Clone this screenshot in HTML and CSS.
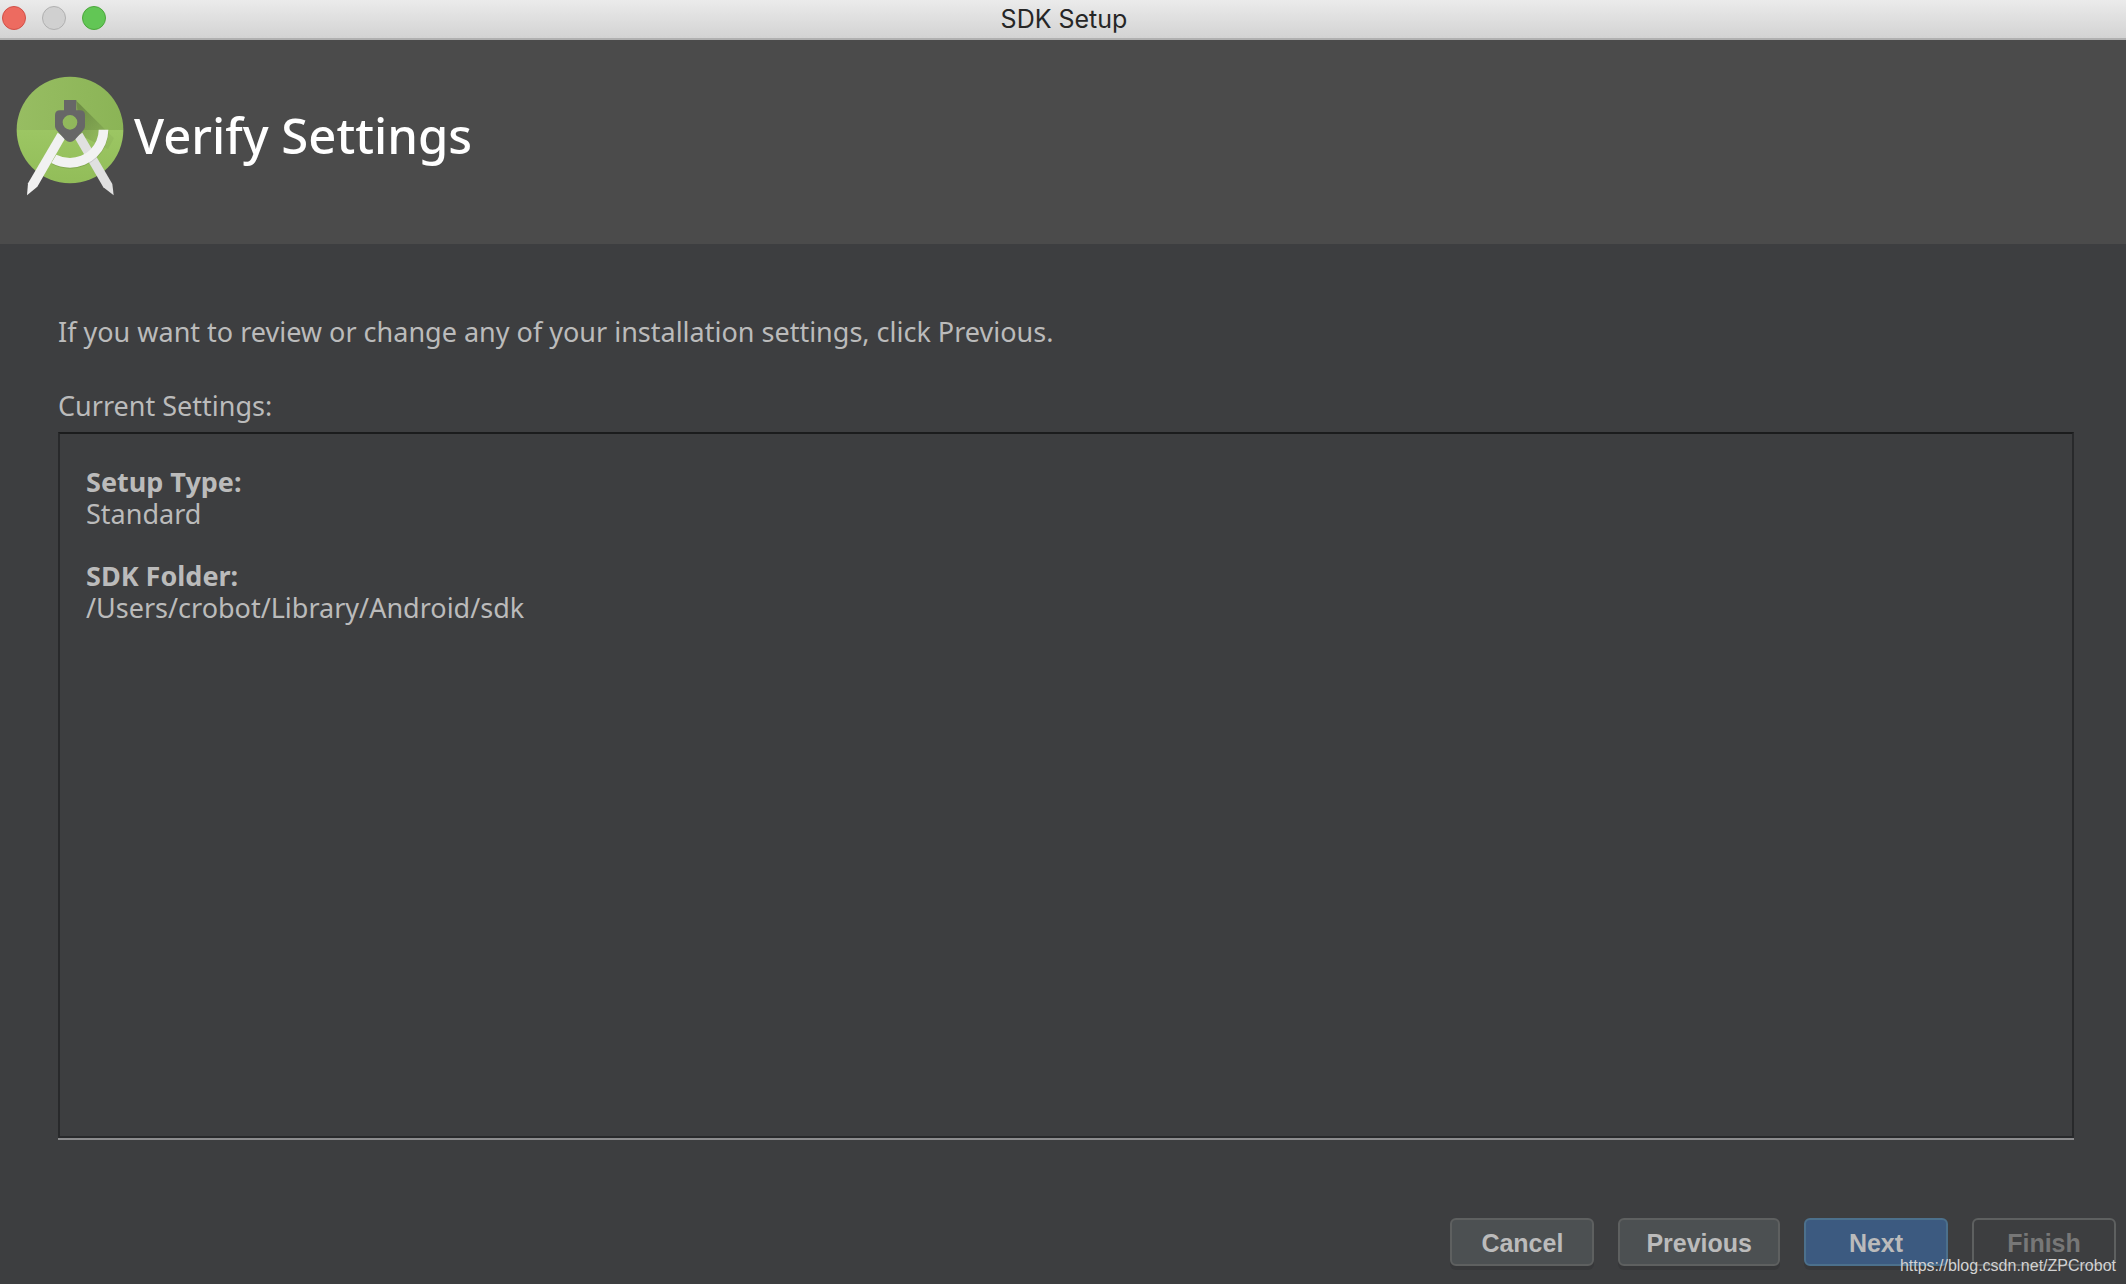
FILE: index.html
```
<!DOCTYPE html>
<html lang="en">
<head>
    <meta charset="UTF-8">
    <meta name="viewport" content="width=device-width, initial-scale=1.0">
    <title>SDK Setup</title>
    <link rel="stylesheet" href="styles.css">
</head>
<body>
    <div class="titlebar">
        <div class="window-controls">
            <button class="dot close" type="button" aria-label="Close"></button>
            <button class="dot minimize" type="button" aria-label="Minimize" disabled></button>
            <button class="dot zoom" type="button" aria-label="Zoom"></button>
        </div>
        <div class="window-title">SDK Setup</div>
    </div>

    <header class="banner">
        <svg class="logo" viewBox="48 48 324 360" aria-hidden="true">
            <defs>
                <linearGradient id="shade" gradientUnits="userSpaceOnUse" x1="235" y1="150" x2="325" y2="225">
                    <stop offset="0" stop-color="#000" stop-opacity="0.22"/>
                    <stop offset="1" stop-color="#000" stop-opacity="0.04"/>
                </linearGradient>
                <linearGradient id="upper" x1="0" y1="0" x2="1" y2="0">
                    <stop offset="0" stop-color="#97bd62"/>
                    <stop offset="1" stop-color="#8bb456"/>
                </linearGradient>
                <linearGradient id="lower" x1="0" y1="0" x2="0" y2="1">
                    <stop offset="0" stop-color="#9cc663"/>
                    <stop offset="1" stop-color="#92bd59"/>
                </linearGradient>
            </defs>
            <path d="M50 210a160 160 0 0 1 320 0z" fill="url(#upper)"/>
            <path d="M50 210a160 160 0 0 0 320 0z" fill="url(#lower)"/>
            <path d="M229 122L342 235L324 268L240 225z" fill="url(#shade)"/>
            <!-- legs -->
            <path d="M224 234L247 218L337 372L341 406L310 382z" fill="#e0e0e0"/>
            <path d="M173 218L196 234L112 380L81 406L84 370z" fill="#f1f1f1"/>
            <!-- arc -->
            <path d="M155 312Q182 326 210 326A116 116 0 0 0 326 212H296A86 86 0 0 1 210 297Q189 297 169 286z" fill="#000" opacity="0.12"/>
            <path d="M154 309Q180 323 210 323A115 114 0 0 0 325 209H296A86 85 0 0 1 210 294Q189 294 169 284z" fill="#f2f2f2"/>
            <!-- head -->
            <path fill-rule="evenodd" d="M192 120H229V151H240Q255 151 255 166V199Q255 206 250 211L224 240Q210 252 196 240L170 211Q165 206 165 199V166Q165 151 180 151H192zM210 165a22 22 0 1 0 0 44a22 22 0 1 0 0-44z" fill="#676767"/>
        </svg>
        <h1>Verify Settings</h1>
    </header>

    <main class="content">
        <p class="intro">If you want to review or change any of your installation settings, click Previous.</p>
        <h2 class="caption" id="caption">Current Settings:</h2>
        <dl class="settings" aria-labelledby="caption">
            <div class="setting">
                <dt>Setup Type:</dt>
                <dd>Standard</dd>
            </div>
            <div class="setting">
                <dt>SDK Folder:</dt>
                <dd>/Users/crobot/Library/Android/sdk</dd>
            </div>
        </dl>
    </main>

    <footer class="actions">
        <button class="btn" type="button">Cancel</button>
        <button class="btn" type="button">Previous</button>
        <button class="btn primary" type="button">Next</button>
        <button class="btn" type="button" disabled>Finish</button>
        <span class="watermark">https://blog.csdn.net/ZPCrobot</span>
    </footer>
</body>
</html>
```
FILE: styles.css
```
* {
    margin: 0;
    padding: 0;
    box-sizing: border-box;
}

body {
    display: flex;
    flex-direction: column;
    min-height: 100vh;
    background: #3d3e40;
    color: #bbbbbb;
    font-family: "Noto Sans", "Open Sans", sans-serif;
    font-size: 27px;
    line-height: 32px;
}

.titlebar {
    display: grid;
    grid-template-columns: 1fr auto 1fr;
    align-items: center;
    height: 40px;
    padding: 0 0 2px 2px;
    background: linear-gradient(#ebebeb, #d3d3d3);
    border-bottom: 2px solid #b0b0b0;
}

.window-controls {
    display: flex;
    gap: 16px;
}

.dot {
    width: 24px;
    height: 24px;
    border: 1px solid;
    border-radius: 50%;
}

.dot.close {
    background: #ed6b60;
    border-color: #d15048;
}

.dot.minimize {
    background: #d0d0d0;
    border-color: #b0b0b0;
}

.dot.zoom {
    background: #62c655;
    border-color: #4ca73c;
}

.window-title {
    padding-top: 2px;
    color: #262626;
    font-family: Inter, sans-serif;
    font-size: 25px;
}

.banner {
    display: flex;
    align-items: flex-start;
    gap: 10px;
    height: 204px;
    padding: 36px 16px;
    background: #4b4b4b;
}

.logo {
    width: 108px;
    height: 120px;
}

h1 {
    padding-top: 24px;
    color: #ffffff;
    font-size: 49px;
    font-weight: 500;
    line-height: 70px;
}

.content {
    flex: 1;
    display: flex;
    flex-direction: column;
    padding: 72px 52px 0 58px;
}

.caption {
    margin: 42px 0 10px;
    font-size: 27px;
    font-weight: 400;
}

.settings {
    flex: 1;
    display: flex;
    flex-direction: column;
    gap: 30px;
    padding: 32px 26px;
    border: 2px solid #28292b;
    border-top-color: #1b1c1d;
    box-shadow: 0 2px #8c8c8e;
}

dt {
    font-weight: 700;
}

.actions {
    position: relative;
    display: flex;
    justify-content: flex-end;
    gap: 24px;
    padding: 80px 10px 18px;
}

.btn {
    min-width: 144px;
    height: 48px;
    padding: 2px 26px 0;
    background: #4c5052;
    border: 2px solid #5e6060;
    border-radius: 6px;
    box-shadow: 0 4px #37383a;
    color: #bbbbbb;
    font-family: "Liberation Sans", Arial, sans-serif;
    font-size: 25px;
    font-weight: 700;
}

.btn.primary {
    background: #3c5a80;
    border-color: #4c708c;
}

.btn:disabled {
    background: transparent;
    box-shadow: none;
    color: #777777;
}

/* sits over the bottom edge of the buttons */
.watermark {
    position: absolute;
    right: 10px;
    bottom: 2px;
    color: #d2d2d2;
    font-family: "Liberation Sans", Arial, sans-serif;
    font-size: 16px;
}
```
